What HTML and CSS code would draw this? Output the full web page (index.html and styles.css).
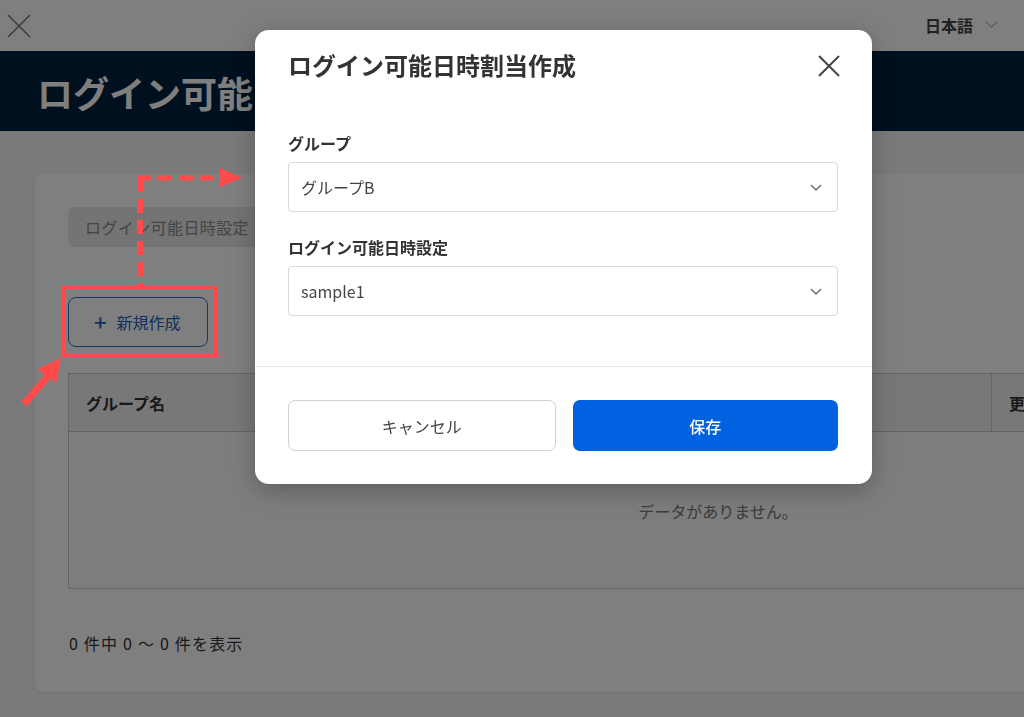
FILE: index.html
```html
<!DOCTYPE html>
<html lang="ja">
<head>
<meta charset="utf-8">
<title>ログイン可能日時割当作成</title>
<link rel="stylesheet" href="styles.css">
</head>
<body>
<div class="page">
  <header class="topbar">
    <svg class="topbar-close" width="24" height="24" viewBox="0 0 24 24"><path d="M1 1L23 23M23 1L1 23" stroke="#7a7a7a" stroke-width="1.6" fill="none"/></svg>
    <div class="lang">日本語
      <svg width="13" height="7" viewBox="0 0 13 7"><path d="M1 1L6.5 6L12 1" stroke="#bbb" stroke-width="1.3" fill="none"/></svg>
    </div>
  </header>
  <section class="hero"><h1 class="hero-title">ログイン可能日時割当</h1></section>
  <main class="main">
    <div class="card">
      <div class="tab">ログイン可能日時設定</div>
      <button class="new-btn"><span class="plus">+</span>新規作成</button>
      <div class="table">
        <div class="thead">
          <div class="th th-name">グループ名</div>
          <div class="th th-upd">更新日時</div>
        </div>
        <div class="tbody">データがありません。</div>
      </div>
      <p class="count">0 件中 0 ～ 0 件を表示</p>
    </div>
  </main>
</div>

<div class="overlay"></div>

<svg class="annot" width="1024" height="717" viewBox="0 0 1024 717">
  <path d="M140 178V286" stroke="#ff4b4b" stroke-width="6" stroke-dasharray="14 7" fill="none"/>
  <path d="M137 178H218" stroke="#ff4b4b" stroke-width="5" stroke-dasharray="14 7" fill="none"/>
  <polygon points="220,168 242,178 220,187" fill="#ff4b4b"/>
  <rect x="63.5" y="287.5" width="152" height="68" stroke="#ff4b4b" stroke-width="3" fill="none"/>
  <polygon points="21.4,401.7 44.5,374.8 37.8,369.1 61,358 55.9,383.5 50.6,378.5 26.7,406.3" fill="#ff4b4b"/>
</svg>

<div class="modal">
  <div class="modal-head">
    <h2 class="modal-title">ログイン可能日時割当作成</h2>
    <svg class="modal-close" width="22" height="22" viewBox="0 0 22 22"><path d="M1 1L21 21M21 1L1 21" stroke="#444" stroke-width="2" fill="none"/></svg>
  </div>
  <div class="modal-body">
    <div class="field">
      <label class="field-label">グループ</label>
      <div class="select"><span>グループB</span>
        <svg width="12" height="7" viewBox="0 0 12 7"><path d="M1 1L6 6L11 1" stroke="#666" stroke-width="1.4" fill="none"/></svg>
      </div>
    </div>
    <div class="field">
      <label class="field-label">ログイン可能日時設定</label>
      <div class="select"><span>sample1</span>
        <svg width="12" height="7" viewBox="0 0 12 7"><path d="M1 1L6 6L11 1" stroke="#666" stroke-width="1.4" fill="none"/></svg>
      </div>
    </div>
  </div>
  <div class="modal-foot">
    <button class="btn btn-cancel">キャンセル</button>
    <button class="btn btn-save">保存</button>
  </div>
</div>
</body>
</html>
```

FILE: styles.css
```css
* { box-sizing: border-box; }
html, body { margin: 0; padding: 0; width: 1024px; height: 717px; overflow: hidden; }
body {
  font-family: "Noto Sans CJK JP", "Noto Sans", sans-serif;
  background: #f5f5f5;
  color: #333;
}
.page { width: 1024px; }
.topbar {
  height: 51px;
  background: #fff;
  display: flex;
  align-items: center;
  justify-content: space-between;
  padding: 0 26px 0 7px;
}
.topbar-close { display: block; margin-top: 1px; }
.lang {
  display: flex;
  align-items: center;
  gap: 12px;
  font-weight: 700;
  font-size: 16px;
  color: #444;
  margin-top: -2px;
}
.hero {
  height: 80px;
  background: #02203e;
  display: flex;
  align-items: center;
  padding-left: 37px;
}
.hero-title {
  margin: 0;
  font-size: 36px;
  font-weight: 700;
  color: #fff;
  white-space: nowrap;
  line-height: 1;
  margin-top: 2px;
}
.main { padding: 43px 0 0 35px; }
.card {
  width: 1366px;
  background: #fff;
  border-radius: 6px;
  box-shadow: 0 1px 3px rgba(0,0,0,.08);
  padding: 33px 33px 37px 33px;
}
.tab {
  display: inline-flex;
  align-items: center;
  height: 40px;
  padding: 0 17px;
  background: #e8e8e8;
  border-radius: 7px;
  color: #8a8a8a;
  font-size: 16px;
  letter-spacing: 0.4px;
}
.new-btn {
  display: flex;
  align-items: center;
  margin-top: 50px;
  width: 140px;
  height: 50px;
  padding: 0 0 0 25px;
  border: 1px solid #2a6ec8;
  border-radius: 8px;
  background: #fff;
  color: #1f5fb8;
  font-family: inherit;
  font-size: 16px;
}
.plus { font-size: 22px; font-weight: 500; margin-right: 10px; line-height: 1; margin-top: -2px; }
.table {
  margin-top: 26px;
  width: 1300px;
  border: 1px solid #c8c8c8;
}
.thead {
  display: flex;
  height: 58px;
  background: #f0f0f0;
  border-bottom: 1px solid #c8c8c8;
}
.th {
  display: flex;
  align-items: center;
  padding-left: 17px;
  font-weight: 700;
  font-size: 16px;
  color: #333;
}
.th-name { width: 923px; border-right: 1px solid #c8c8c8; }
.th-upd { flex: 1; }
.tbody {
  height: 156px;
  display: flex;
  justify-content: center;
  padding-top: 67px;
  font-size: 16px;
  color: #777;
  background: #fafafa;
}
.count {
  margin: 42px 0 0;
  font-size: 16px;
  line-height: 24px;
  color: #333;
  padding-left: 1px;
  letter-spacing: 1.2px;
}
.overlay {
  position: fixed;
  inset: 0;
  background: rgba(0,0,0,.5);
}
.annot { position: absolute; top: 0; left: 0; }
.modal {
  position: absolute;
  top: 30px;
  left: 255px;
  width: 617px;
  height: 454px;
  background: #fff;
  border-radius: 14px;
  box-shadow: 0 6px 24px rgba(0,0,0,.25);
  display: flex;
  flex-direction: column;
}
.modal-head {
  display: flex;
  align-items: center;
  justify-content: space-between;
  padding: 0 32px 0 33px;
  height: 70px;
}
.modal-title {
  margin: 0;
  font-size: 24px;
  font-weight: 700;
  line-height: 30px;
  color: #333;
}
.modal-close { display: block; margin-top: 2px; }
.modal-body {
  padding: 32px 34px 50px 33px;
  border-bottom: 1px solid #e6e8ec;
  display: flex;
  flex-direction: column;
  gap: 24px;
}
.field { display: flex; flex-direction: column; gap: 8px; }
.field-label {
  font-size: 16px;
  font-weight: 700;
  line-height: 22px;
  color: #333;
}
.select {
  height: 50px;
  border: 1px solid #d9d9d9;
  border-radius: 4px;
  display: flex;
  align-items: center;
  justify-content: space-between;
  padding: 0 15px 0 12px;
  font-size: 16px;
  color: #444;
}
.modal-foot {
  display: flex;
  gap: 17px;
  padding: 33px 34px 0 33px;
}
.btn {
  flex: 1;
  height: 51px;
  border-radius: 7px;
  font-family: inherit;
  font-size: 16px;
}
.btn-cancel { background: #fff; border: 1px solid #d0d0d0; color: #444; }
.btn-save { background: #0062e0; border: none; color: #fff; font-weight: 500; }
```
